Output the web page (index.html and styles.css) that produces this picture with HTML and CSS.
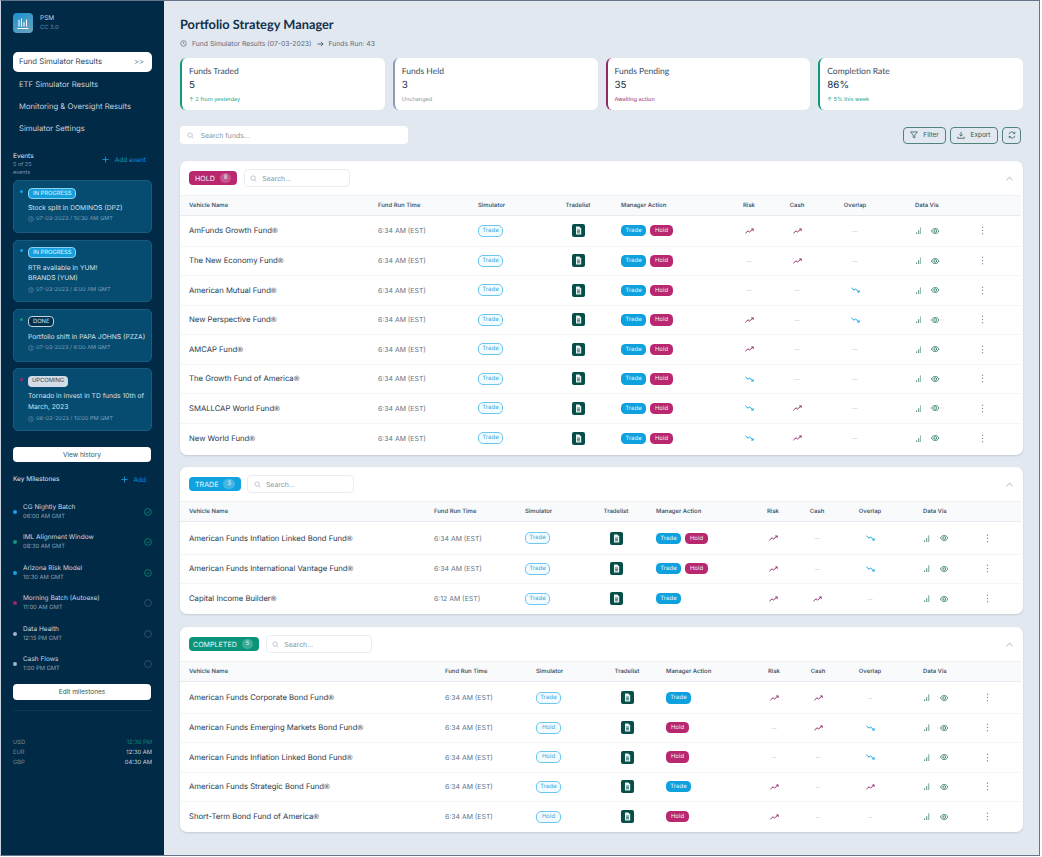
FILE: index.html
```html
<!DOCTYPE html>
<html lang="en">
<head>
<meta charset="utf-8">
<title>Portfolio Strategy Manager</title>
<link rel="stylesheet" href="styles.css">
</head>
<body>
<svg class="defs" aria-hidden="true">
  <symbol id="i-clock" viewBox="0 0 12 12"><circle cx="6" cy="6" r="4.8" fill="none" stroke="currentColor"/><path d="M6 3.2V6l2 1.2" fill="none" stroke="currentColor"/></symbol>
  <symbol id="i-search" viewBox="0 0 12 12"><circle cx="5.3" cy="5.3" r="3.8" fill="none" stroke="currentColor"/><path d="M8.2 8.2l2.6 2.6" stroke="currentColor"/></symbol>
  <symbol id="i-doc" viewBox="0 0 13 13"><rect width="13" height="13" rx="2" fill="#064e47"/><path d="M4 2.600h3.400L9.200 4.400v6H4z" fill="#e8f3f1"/><path d="M5 6h3M5 7.400h3M5 8.800h3" stroke="#064e47" stroke-width=".7"/></symbol>
  <symbol id="i-up" viewBox="0 0 9 6"><path d="M.4 5.200l2.600-2.400 1.600 1.200L8 1" fill="none" stroke="#96306f" stroke-width="1"/><path d="M5.800.6H8.600V3.200z" fill="#96306f"/></symbol>
  <symbol id="i-down" viewBox="0 0 9 6"><path d="M.4.8l2.600 2.400 1.600-1.200L8 5" fill="none" stroke="#18a4e4" stroke-width="1"/><path d="M5.800 5.400H8.600V2.800z" fill="#18a4e4"/></symbol>
  <symbol id="i-bars" viewBox="0 0 5.500 7"><path d="M.6 7V5.400M2.700 7V3.200M4.900 7V.4" stroke="#3f7f73" stroke-width=".9" fill="none"/></symbol>
  <symbol id="i-eye" viewBox="0 0 10 7"><path d="M.5 3.500C2 1.200 3.400.5 5 .5s3 .7 4.500 3c-1.500 2.300-2.900 3-4.500 3s-3-.7-4.500-3z" fill="none" stroke="#2f7a6c"/><circle cx="5" cy="3.500" r="1.600" fill="none" stroke="#2f7a6c"/></symbol>
  <symbol id="i-more" viewBox="0 0 3 9"><circle cx="1.500" cy="1.200" r=".7" fill="#7f8ea3"/><circle cx="1.500" cy="4.500" r=".7" fill="#7f8ea3"/><circle cx="1.500" cy="7.800" r=".7" fill="#7f8ea3"/></symbol>
  <symbol id="i-chev" viewBox="0 0 8 5"><path d="M.7 4.200L4 1l3.300 3.200" fill="none" stroke="#94a3b8"/></symbol>
  <symbol id="i-plus" viewBox="0 0 7 7"><path d="M3.500.5v6M.5 3.500h6" stroke="#0e8fd0" fill="none"/></symbol>
  <symbol id="i-check" viewBox="0 0 8 8"><circle cx="4" cy="4" r="3.400" fill="none" stroke="#0c8a73" stroke-width=".8"/><path d="M2.500 4l1.100 1.100 2-2.100" fill="none" stroke="#0c8a73" stroke-width=".8"/></symbol>
  <symbol id="i-ring" viewBox="0 0 8 8"><circle cx="4" cy="4" r="3.400" fill="none" stroke="#3d5a70" stroke-width=".8"/></symbol>
</svg>

<div class="frame">
  <aside class="sidebar">
    <div class="brand">
      <span class="logo"><svg viewBox="0 0 20 20" width="20" height="20"><path d="M6 13.500V7M8.500 13.500V5.500M11 13.500V9M13.500 13.500V6.500M4.500 15.500h11" stroke="#fff" stroke-width="1.100" fill="none"/></svg></span>
      <div class="brand-text"><div class="brand-name">PSM</div><div class="brand-ver">CC 3.0</div></div>
    </div>

    <nav class="nav">
      <a class="nav-item is-active"><span>Fund Simulator Results</span><span class="nav-arrows">&gt;&gt;</span></a>
      <a class="nav-item">ETF Simulator Results</a>
      <a class="nav-item">Monitoring &amp; Oversight Results</a>
      <a class="nav-item">Simulator Settings</a>
    </nav>

    <div class="events-head">
      <div class="events-title"><div class="side-h">Events</div><div class="events-count">5 of 25<br>events</div></div>
      <a class="add-link add-event"><svg class="i7"><use href="#i-plus"/></svg>Add event</a>
    </div>

    <div class="event-list">
      <div class="event ev-short">
        <span class="ev-dot dot-blue"></span>
        <div><span class="ev-tag tag-prog">IN PROGRESS</span><div class="ev-title">Stock split in DOMINOS (DPZ)</div><div class="ev-time"><svg class="i6"><use href="#i-clock"/></svg>07-03-2023 / 10:30 AM GMT</div></div>
      </div>
      <div class="event ev-tall">
        <span class="ev-dot dot-blue"></span>
        <div><span class="ev-tag tag-prog">IN PROGRESS</span><div class="ev-title">RTR available in YUM!<br>BRANDS (YUM)</div><div class="ev-time"><svg class="i6"><use href="#i-clock"/></svg>07-03-2023 / 8:00 AM GMT</div></div>
      </div>
      <div class="event ev-short">
        <span class="ev-dot dot-green"></span>
        <div><span class="ev-tag tag-done">DONE</span><div class="ev-title">Portfolio shift in PAPA JOHNS (PZZA)</div><div class="ev-time"><svg class="i6"><use href="#i-clock"/></svg>07-03-2023 / 6:00 AM GMT</div></div>
      </div>
      <div class="event ev-tall">
        <span class="ev-dot dot-pink"></span>
        <div><span class="ev-tag tag-up">UPCOMING</span><div class="ev-title">Tornado in invest in TD funds 10th of<br>March, 2023</div><div class="ev-time"><svg class="i6"><use href="#i-clock"/></svg>06-03-2023 / 10:00 PM GMT</div></div>
      </div>
    </div>

    <button class="side-btn history-btn">View history</button>

    <div class="ms-head">
      <div class="side-h">Key Milestones</div>
      <a class="add-link add-ms"><svg class="i7"><use href="#i-plus"/></svg>Add</a>
    </div>

    <ul class="ms-list">
      <li class="ms"><span class="ms-dot dot-blue"></span><div class="ms-text"><div class="ms-title">CG Nightly Batch</div><div class="ms-time">06:00 AM GMT</div></div><svg class="i8"><use href="#i-check"/></svg></li>
      <li class="ms"><span class="ms-dot dot-green"></span><div class="ms-text"><div class="ms-title">IML Alignment Window</div><div class="ms-time">08:30 AM GMT</div></div><svg class="i8"><use href="#i-check"/></svg></li>
      <li class="ms"><span class="ms-dot dot-blue"></span><div class="ms-text"><div class="ms-title">Arizona Risk Model</div><div class="ms-time">10:30 AM GMT</div></div><svg class="i8"><use href="#i-check"/></svg></li>
      <li class="ms"><span class="ms-dot dot-pink"></span><div class="ms-text"><div class="ms-title">Morning Batch (Autoexe)</div><div class="ms-time">11:00 AM GMT</div></div><svg class="i8"><use href="#i-ring"/></svg></li>
      <li class="ms"><span class="ms-dot dot-grey"></span><div class="ms-text"><div class="ms-title">Data Health</div><div class="ms-time">12:15 PM GMT</div></div><svg class="i8"><use href="#i-ring"/></svg></li>
      <li class="ms"><span class="ms-dot dot-grey"></span><div class="ms-text"><div class="ms-title">Cash Flows</div><div class="ms-time">1:00 PM GMT</div></div><svg class="i8"><use href="#i-ring"/></svg></li>
    </ul>

    <button class="side-btn edit-btn">Edit milestones</button>

    <div class="clocks">
      <div class="clock-row"><span>USD</span><span class="clock-now">12:30 PM</span></div>
      <div class="clock-row"><span>EUR</span><span class="clock-val">12:30 AM</span></div>
      <div class="clock-row"><span>GBP</span><span class="clock-val">04:30 AM</span></div>
    </div>
  </aside>

  <main class="main">
    <h1 class="title">Portfolio Strategy Manager</h1>
    <div class="crumbs">
      <svg class="i7"><use href="#i-clock"/></svg><span>Fund Simulator Results (07-03-2023)</span>
      <svg class="crumb-arrow" viewBox="0 0 8 7" width="7" height="6"><path d="M.5 3.500h6.500M4.500 1l2.500 2.500L4.500 6" fill="none" stroke="#475569"/></svg><span>Funds Run: 43</span>
    </div>

    <section class="stats">
      <div class="stat st-green"><div class="stat-label">Funds Traded</div><div class="stat-val">5</div><div class="stat-note note-green">↑ 2 from yesterday</div></div>
      <div class="stat st-grey"><div class="stat-label">Funds Held</div><div class="stat-val">3</div><div class="stat-note note-grey">Unchanged</div></div>
      <div class="stat st-pink"><div class="stat-label">Funds Pending</div><div class="stat-val">35</div><div class="stat-note note-pink">Awaiting action</div></div>
      <div class="stat st-green"><div class="stat-label">Completion Rate</div><div class="stat-val">86%</div><div class="stat-note note-green">↑ 5% this week</div></div>
    </section>

    <div class="toolbar">
      <label class="search-main"><svg class="i7 ic-search"><use href="#i-search"/></svg><span>Search funds...</span></label>
      <div class="tools">
        <button class="tool tool-filter"><svg viewBox="0 0 9 9" width="8" height="8"><path d="M.7 1h7.600L5.400 4.600v3.200L3.600 7V4.600z" fill="none" stroke="#20564f" stroke-width=".8"/></svg>Filter</button>
        <button class="tool tool-export"><svg viewBox="0 0 9 9" width="8" height="8"><path d="M4.500.8v5M2.500 3.800l2 2 2-2M.8 6.500v1.700h7.400V6.500" fill="none" stroke="#20564f" stroke-width=".8"/></svg>Export</button>
        <button class="tool tool-refresh"><svg viewBox="0 0 9 9" width="8" height="8"><path d="M1.200 3.600A3.400 3.400 0 0 1 7.500 2.800M7.800 5.400A3.400 3.400 0 0 1 1.500 6.200M7.600 1v1.900H5.800M1.400 8V6.100h1.800" fill="none" stroke="#20564f" stroke-width=".8"/></svg></button>
      </div>
    </div>

    <section class="panel cols-hold">
      <header class="panel-head">
        <span class="badge b-hold">HOLD<span class="badge-n">8</span></span>
        <label class="search-sm"><svg class="i7 ic-search"><use href="#i-search"/></svg><span>Search...</span></label>
        <svg class="chev"><use href="#i-chev"/></svg>
      </header>
      <div class="row th"><div>Vehicle Name</div><div>Fund Run Time</div><div>Simulator</div><div class="ctr">Tradelist</div><div>Manager Action</div><div class="ctr">Risk</div><div class="ctr">Cash</div><div class="ctr">Overlap</div><div class="vis">Data Vis</div><div></div></div>

      <div class="row tr"><div class="name">AmFunds Growth Fund<span class="reg">®</span></div><div class="time">6:34 AM (EST)</div><div><span class="pill-o">Trade</span></div><div class="ctr"><svg class="doc"><use href="#i-doc"/></svg></div><div class="acts"><span class="pill p-trade">Trade</span><span class="pill p-hold">Hold</span></div><div class="ctr"><svg class="tr-i"><use href="#i-up"/></svg></div><div class="ctr"><svg class="tr-i"><use href="#i-up"/></svg></div><div class="ctr dash">—</div><div class="vis"><svg class="v-b"><use href="#i-bars"/></svg><svg class="v-e"><use href="#i-eye"/></svg></div><div class="ctr"><svg class="more"><use href="#i-more"/></svg></div></div>
      <div class="row tr"><div class="name">The New Economy Fund<span class="reg">®</span></div><div class="time">6:34 AM (EST)</div><div><span class="pill-o">Trade</span></div><div class="ctr"><svg class="doc"><use href="#i-doc"/></svg></div><div class="acts"><span class="pill p-trade">Trade</span><span class="pill p-hold">Hold</span></div><div class="ctr dash">—</div><div class="ctr"><svg class="tr-i"><use href="#i-up"/></svg></div><div class="ctr dash">—</div><div class="vis"><svg class="v-b"><use href="#i-bars"/></svg><svg class="v-e"><use href="#i-eye"/></svg></div><div class="ctr"><svg class="more"><use href="#i-more"/></svg></div></div>
      <div class="row tr"><div class="name">American Mutual Fund<span class="reg">®</span></div><div class="time">6:34 AM (EST)</div><div><span class="pill-o">Trade</span></div><div class="ctr"><svg class="doc"><use href="#i-doc"/></svg></div><div class="acts"><span class="pill p-trade">Trade</span><span class="pill p-hold">Hold</span></div><div class="ctr dash">—</div><div class="ctr dash">—</div><div class="ctr"><svg class="tr-i"><use href="#i-down"/></svg></div><div class="vis"><svg class="v-b"><use href="#i-bars"/></svg><svg class="v-e"><use href="#i-eye"/></svg></div><div class="ctr"><svg class="more"><use href="#i-more"/></svg></div></div>
      <div class="row tr"><div class="name">New Perspective Fund<span class="reg">®</span></div><div class="time">6:34 AM (EST)</div><div><span class="pill-o">Trade</span></div><div class="ctr"><svg class="doc"><use href="#i-doc"/></svg></div><div class="acts"><span class="pill p-trade">Trade</span><span class="pill p-hold">Hold</span></div><div class="ctr"><svg class="tr-i"><use href="#i-up"/></svg></div><div class="ctr dash">—</div><div class="ctr"><svg class="tr-i"><use href="#i-down"/></svg></div><div class="vis"><svg class="v-b"><use href="#i-bars"/></svg><svg class="v-e"><use href="#i-eye"/></svg></div><div class="ctr"><svg class="more"><use href="#i-more"/></svg></div></div>
      <div class="row tr"><div class="name">AMCAP Fund<span class="reg">®</span></div><div class="time">6:34 AM (EST)</div><div><span class="pill-o">Trade</span></div><div class="ctr"><svg class="doc"><use href="#i-doc"/></svg></div><div class="acts"><span class="pill p-trade">Trade</span><span class="pill p-hold">Hold</span></div><div class="ctr"><svg class="tr-i"><use href="#i-up"/></svg></div><div class="ctr dash">—</div><div class="ctr dash">—</div><div class="vis"><svg class="v-b"><use href="#i-bars"/></svg><svg class="v-e"><use href="#i-eye"/></svg></div><div class="ctr"><svg class="more"><use href="#i-more"/></svg></div></div>
      <div class="row tr"><div class="name">The Growth Fund of America<span class="reg">®</span></div><div class="time">6:34 AM (EST)</div><div><span class="pill-o">Trade</span></div><div class="ctr"><svg class="doc"><use href="#i-doc"/></svg></div><div class="acts"><span class="pill p-trade">Trade</span><span class="pill p-hold">Hold</span></div><div class="ctr"><svg class="tr-i"><use href="#i-down"/></svg></div><div class="ctr dash">—</div><div class="ctr dash">—</div><div class="vis"><svg class="v-b"><use href="#i-bars"/></svg><svg class="v-e"><use href="#i-eye"/></svg></div><div class="ctr"><svg class="more"><use href="#i-more"/></svg></div></div>
      <div class="row tr"><div class="name">SMALLCAP World Fund<span class="reg">®</span></div><div class="time">6:34 AM (EST)</div><div><span class="pill-o">Trade</span></div><div class="ctr"><svg class="doc"><use href="#i-doc"/></svg></div><div class="acts"><span class="pill p-trade">Trade</span><span class="pill p-hold">Hold</span></div><div class="ctr"><svg class="tr-i"><use href="#i-down"/></svg></div><div class="ctr"><svg class="tr-i"><use href="#i-up"/></svg></div><div class="ctr dash">—</div><div class="vis"><svg class="v-b"><use href="#i-bars"/></svg><svg class="v-e"><use href="#i-eye"/></svg></div><div class="ctr"><svg class="more"><use href="#i-more"/></svg></div></div>
      <div class="row tr"><div class="name">New World Fund<span class="reg">®</span></div><div class="time">6:34 AM (EST)</div><div><span class="pill-o">Trade</span></div><div class="ctr"><svg class="doc"><use href="#i-doc"/></svg></div><div class="acts"><span class="pill p-trade">Trade</span><span class="pill p-hold">Hold</span></div><div class="ctr"><svg class="tr-i"><use href="#i-down"/></svg></div><div class="ctr"><svg class="tr-i"><use href="#i-up"/></svg></div><div class="ctr dash">—</div><div class="vis"><svg class="v-b"><use href="#i-bars"/></svg><svg class="v-e"><use href="#i-eye"/></svg></div><div class="ctr"><svg class="more"><use href="#i-more"/></svg></div></div>
    </section>

    <section class="panel cols-trade">
      <header class="panel-head">
        <span class="badge b-trade">TRADE<span class="badge-n">3</span></span>
        <label class="search-sm"><svg class="i7 ic-search"><use href="#i-search"/></svg><span>Search...</span></label>
        <svg class="chev"><use href="#i-chev"/></svg>
      </header>
      <div class="row th"><div>Vehicle Name</div><div>Fund Run Time</div><div>Simulator</div><div class="ctr">Tradelist</div><div>Manager Action</div><div class="ctr">Risk</div><div class="ctr">Cash</div><div class="ctr">Overlap</div><div class="vis">Data Vis</div><div></div></div>

      <div class="row tr"><div class="name">American Funds Inflation Linked Bond Fund<span class="reg">®</span></div><div class="time">6:34 AM (EST)</div><div><span class="pill-o">Trade</span></div><div class="ctr"><svg class="doc"><use href="#i-doc"/></svg></div><div class="acts"><span class="pill p-trade">Trade</span><span class="pill p-hold">Hold</span></div><div class="ctr"><svg class="tr-i"><use href="#i-up"/></svg></div><div class="ctr dash">—</div><div class="ctr"><svg class="tr-i"><use href="#i-down"/></svg></div><div class="vis"><svg class="v-b"><use href="#i-bars"/></svg><svg class="v-e"><use href="#i-eye"/></svg></div><div class="ctr"><svg class="more"><use href="#i-more"/></svg></div></div>
      <div class="row tr"><div class="name">American Funds International Vantage Fund<span class="reg">®</span></div><div class="time">6:34 AM (EST)</div><div><span class="pill-o">Trade</span></div><div class="ctr"><svg class="doc"><use href="#i-doc"/></svg></div><div class="acts"><span class="pill p-trade">Trade</span><span class="pill p-hold">Hold</span></div><div class="ctr"><svg class="tr-i"><use href="#i-up"/></svg></div><div class="ctr dash">—</div><div class="ctr"><svg class="tr-i"><use href="#i-down"/></svg></div><div class="vis"><svg class="v-b"><use href="#i-bars"/></svg><svg class="v-e"><use href="#i-eye"/></svg></div><div class="ctr"><svg class="more"><use href="#i-more"/></svg></div></div>
      <div class="row tr"><div class="name">Capital Income Builder<span class="reg">®</span></div><div class="time">6:12 AM (EST)</div><div><span class="pill-o">Trade</span></div><div class="ctr"><svg class="doc"><use href="#i-doc"/></svg></div><div class="acts"><span class="pill p-trade">Trade</span></div><div class="ctr"><svg class="tr-i"><use href="#i-up"/></svg></div><div class="ctr"><svg class="tr-i"><use href="#i-up"/></svg></div><div class="ctr dash">—</div><div class="vis"><svg class="v-b"><use href="#i-bars"/></svg><svg class="v-e"><use href="#i-eye"/></svg></div><div class="ctr"><svg class="more"><use href="#i-more"/></svg></div></div>
    </section>

    <section class="panel cols-done">
      <header class="panel-head">
        <span class="badge b-done">COMPLETED<span class="badge-n">5</span></span>
        <label class="search-sm"><svg class="i7 ic-search"><use href="#i-search"/></svg><span>Search...</span></label>
        <svg class="chev"><use href="#i-chev"/></svg>
      </header>
      <div class="row th"><div>Vehicle Name</div><div>Fund Run Time</div><div>Simulator</div><div class="ctr">Tradelist</div><div>Manager Action</div><div class="ctr">Risk</div><div class="ctr">Cash</div><div class="ctr">Overlap</div><div class="vis">Data Vis</div><div></div></div>

      <div class="row tr"><div class="name">American Funds Corporate Bond Fund<span class="reg">®</span></div><div class="time">6:34 AM (EST)</div><div><span class="pill-o">Trade</span></div><div class="ctr"><svg class="doc"><use href="#i-doc"/></svg></div><div class="acts"><span class="pill p-trade">Trade</span></div><div class="ctr"><svg class="tr-i"><use href="#i-up"/></svg></div><div class="ctr"><svg class="tr-i"><use href="#i-up"/></svg></div><div class="ctr dash">—</div><div class="vis"><svg class="v-b"><use href="#i-bars"/></svg><svg class="v-e"><use href="#i-eye"/></svg></div><div class="ctr"><svg class="more"><use href="#i-more"/></svg></div></div>
      <div class="row tr"><div class="name">American Funds Emerging Markets Bond Fund<span class="reg">®</span></div><div class="time">6:34 AM (EST)</div><div><span class="pill-o">Hold</span></div><div class="ctr"><svg class="doc"><use href="#i-doc"/></svg></div><div class="acts"><span class="pill p-hold">Hold</span></div><div class="ctr dash">—</div><div class="ctr"><svg class="tr-i"><use href="#i-up"/></svg></div><div class="ctr"><svg class="tr-i"><use href="#i-down"/></svg></div><div class="vis"><svg class="v-b"><use href="#i-bars"/></svg><svg class="v-e"><use href="#i-eye"/></svg></div><div class="ctr"><svg class="more"><use href="#i-more"/></svg></div></div>
      <div class="row tr"><div class="name">American Funds Inflation Linked Bond Fund<span class="reg">®</span></div><div class="time">6:34 AM (EST)</div><div><span class="pill-o">Hold</span></div><div class="ctr"><svg class="doc"><use href="#i-doc"/></svg></div><div class="acts"><span class="pill p-hold">Hold</span></div><div class="ctr dash">—</div><div class="ctr dash">—</div><div class="ctr"><svg class="tr-i"><use href="#i-down"/></svg></div><div class="vis"><svg class="v-b"><use href="#i-bars"/></svg><svg class="v-e"><use href="#i-eye"/></svg></div><div class="ctr"><svg class="more"><use href="#i-more"/></svg></div></div>
      <div class="row tr"><div class="name">American Funds Strategic Bond Fund<span class="reg">®</span></div><div class="time">6:34 AM (EST)</div><div><span class="pill-o">Trade</span></div><div class="ctr"><svg class="doc"><use href="#i-doc"/></svg></div><div class="acts"><span class="pill p-trade">Trade</span></div><div class="ctr"><svg class="tr-i"><use href="#i-up"/></svg></div><div class="ctr dash">—</div><div class="ctr"><svg class="tr-i"><use href="#i-up"/></svg></div><div class="vis"><svg class="v-b"><use href="#i-bars"/></svg><svg class="v-e"><use href="#i-eye"/></svg></div><div class="ctr"><svg class="more"><use href="#i-more"/></svg></div></div>
      <div class="row tr"><div class="name">Short-Term Bond Fund of America<span class="reg">®</span></div><div class="time">6:34 AM (EST)</div><div><span class="pill-o">Hold</span></div><div class="ctr"><svg class="doc"><use href="#i-doc"/></svg></div><div class="acts"><span class="pill p-hold">Hold</span></div><div class="ctr"><svg class="tr-i"><use href="#i-up"/></svg></div><div class="ctr dash">—</div><div class="ctr dash">—</div><div class="vis"><svg class="v-b"><use href="#i-bars"/></svg><svg class="v-e"><use href="#i-eye"/></svg></div><div class="ctr"><svg class="more"><use href="#i-more"/></svg></div></div>
    </section>
  </main>
</div>
</body>
</html>
```

FILE: styles.css
```css
* { box-sizing: border-box; }
html, body { margin: 0; background: #fff; }
body { font-family: Inter, "Liberation Sans", sans-serif; color: #1e293b; text-rendering: geometricPrecision; }
.defs { display: none; }
svg { display: block; flex: none; }
.i6 { width: 6px; height: 6px; }
.i7 { width: 7px; height: 7px; }
.i8 { width: 8px; height: 8px; }

.frame { display: flex; width: 1040px; height: 856px; border: 1px solid #64748b; border-left-color: #c9d3df; overflow: hidden; background: #e2e8f0; }

/* sidebar */
.sidebar { width: 163px; flex: none; background: #012a47; color: #e2e8f0; padding: 12px 12px 0; display: flex; flex-direction: column; }
.brand { display: flex; align-items: center; gap: 7px; height: 20px; }
.logo { width: 20px; height: 20px; border-radius: 4px; background: linear-gradient(150deg, #1a8fd0, #6da4bd); display: block; }
.brand-name { font-size: 6.5px; line-height: 9.5px; color: #c6d2dd; }
.brand-ver { font-size: 5.8px; line-height: 9.5px; color: #6f8aa0; }
.nav { margin-top: 18.7px; display: flex; flex-direction: column; gap: 2px; }
.nav-item { height: 20.3px; border-radius: 5px; display: flex; align-items: center; justify-content: space-between; padding: 0 8px 0 6px; font-size: 7.7px; color: #c5d1dc; }
.is-active { background: #fff; color: #24475f; }
.nav-arrows { font-size: 7.5px; }
.events-head { margin-top: 13.3px; display: flex; justify-content: space-between; }
.side-h { font-size: 6.5px; line-height: 9px; color: #dbe4ec; }
.events-count { font-size: 5.5px; line-height: 8px; color: #7f97aa; }
.add-link { display: flex; align-items: center; gap: 6px; font-size: 6.5px; color: #0e8fd0; }
.add-event { margin: 0 6px 10px 0; }
.event-list { margin-top: 3px; display: flex; flex-direction: column; gap: 6.6px; }
.event { display: flex; gap: 5.5px; background: #064b70; border: 1px solid #1a5c80; border-radius: 5px; padding: 6.5px 4px 0 5.5px; width: 138.5px; }
.ev-short { height: 53px; }
.ev-tall { height: 62.5px; }
.ev-dot { width: 3px; height: 3px; border-radius: 50%; margin-top: 2px; flex: none; }
.dot-blue { background: #0ea5e9; }
.dot-green { background: #0e9a7c; }
.dot-pink { background: #a5246d; }
.dot-grey { background: #a6b4c4; }
.ev-tag { display: block; width: fit-content; font-size: 5.8px; line-height: 10px; height: 11px; padding: 0 4px; border-radius: 4px; }
.tag-prog { background: #129fdc; color: #e6f5fc; border: .5px solid #8bd1f0; }
.tag-done { background: #02304f; color: #dce6ee; border: .5px solid #c6d4df; }
.tag-up { background: #d3dde8; color: #2f4a5f; }
.ev-title { font-size: 6.7px; line-height: 10.3px; color: #d8e2ea; margin-top: 4.5px; white-space: nowrap; }
.ev-time { display: flex; align-items: center; gap: 2px; font-size: 5.6px; line-height: 8px; color: #7f9fb6; margin-top: 1.5px; }
.ev-tall .ev-time { margin-top: 2.5px; }
.side-btn { display: block; width: 138px; height: 15.5px; border: 0; padding: 0; border-radius: 4px; background: #fff; color: #2a5a5b; font-family: inherit; font-size: 6.5px; flex: none; }
.history-btn { margin-top: 16px; }
.ms-head { display: flex; justify-content: space-between; align-items: center; margin-top: 12.5px; height: 10px; flex: none; }
.add-ms { margin-right: 6px; }
.ms-list { list-style: none; margin: 18px 0 0; padding: 0; display: flex; flex-direction: column; gap: 12.5px; }
.ms { display: flex; align-items: center; height: 18px; }
.ms-dot { width: 4px; height: 4px; border-radius: 50%; flex: none; }
.ms-text { flex: 1; margin-left: 6px; }
.ms-title { font-size: 6.5px; line-height: 9px; color: #ccd8e2; }
.ms-time { font-size: 5.8px; line-height: 9px; color: #8ea4b6; }
.edit-btn { margin-top: 10.7px; }
.clocks { margin-top: 10px; border-top: 1px solid #0a3a4c; padding-top: 28px; display: flex; flex-direction: column; gap: 2.9px; }
.clock-row { display: flex; justify-content: space-between; font-size: 5.8px; line-height: 7.4px; color: #6f8aa0; }
.clock-now { color: #0e8a73; }
.clock-val { color: #c9d5df; }

/* main */
.main { flex: 1; min-width: 0; padding: 14.5px 16px 0 16px; }
.title { margin: 0; font-family: Lato, sans-serif; font-size: 12.8px; line-height: 16px; font-weight: 700; color: #12304a; }
.crumbs { display: flex; align-items: center; gap: 5px; margin-top: 7.5px; height: 9px; font-size: 6.8px; color: #5b6b7f; }
.crumbs svg { color: #475569; }
.stats { display: grid; grid-template-columns: repeat(4, 1fr); gap: 8px; margin-top: 9.5px; }
.stat { height: 52px; background: #fff; border-radius: 6px; border-left: 2px solid; padding: 8px 7px; }
.st-green { border-left-color: #0e9a7c; }
.st-grey { border-left-color: #8a9bb5; }
.st-pink { border-left-color: #8f2a68; }
.stat-label { font-family: Lato, sans-serif; font-size: 8.5px; line-height: 10px; color: #3c4c60; }
.stat-val { font-size: 9.8px; line-height: 13px; color: #17324c; margin-top: 3px; }
.stat-note { font-size: 5.6px; line-height: 8px; margin-top: 4px; }
.note-green { color: #1aa58a; }
.note-grey { color: #8493a5; }
.note-pink { color: #96306f; }

.toolbar { display: flex; justify-content: space-between; align-items: center; margin-top: 16px; height: 19px; }
.search-main { width: 228px; height: 18.5px; background: #fff; border-radius: 4px; display: flex; align-items: center; padding-left: 7px; gap: 6.5px; font-size: 6.9px; color: #8793a3; }
.ic-search { color: #94a3b8; }
.tools { display: flex; gap: 4px; margin-right: 2px; }
.tool { height: 17px; display: flex; align-items: center; justify-content: center; gap: 5px; background: transparent; border: 1px solid #52837b; border-radius: 4px; color: #2a5a5b; font-family: inherit; font-size: 6.5px; padding: 0; }
.tool-filter { width: 43px; }
.tool-export { width: 48px; }
.tool-refresh { width: 19px; }

.panel { background: #fff; border-radius: 7px; box-shadow: 0 1px 2px rgba(71, 85, 105, .2); overflow: hidden; margin-top: 12.7px; }
.toolbar + .panel { margin-top: 16.5px; padding-bottom: 1.5px; }
.cols-done { margin-top: 13.5px; }
.panel-head { height: 34px; display: flex; align-items: center; padding: 0 9px; gap: 6.5px; }
.badge { height: 14.5px; display: flex; align-items: center; gap: 5px; padding: 0 6px; border-radius: 4px; color: #e9f4f8; font-size: 7.1px; }
.badge-n { background: rgba(255, 255, 255, .22); border-radius: 5px; height: 9.5px; min-width: 11.5px; text-align: center; font-size: 6px; line-height: 9.5px; }
.b-hold { background: #b9276f; }
.b-trade { background: #10a3e0; }
.b-done { background: #0a957a; padding-left: 4px; }
.search-sm { width: 106.5px; height: 17.5px; border: 1px solid #e9edf3; border-radius: 4px; display: flex; align-items: center; gap: 5px; padding-left: 5.5px; font-size: 6.9px; color: #8793a3; }
.chev { width: 7px; height: 5px; margin-left: auto; margin-right: 1px; }

.row { display: grid; width: 841px; align-items: center; padding-left: 9px; }
.cols-hold .row { grid-template-columns: 189px 100px 57px 86px 104px 48px 48px 68px 71px 44px; }
.cols-trade .row { grid-template-columns: 245px 91px 51px 80px 93px 48px 40px 66px 61px 46px; }
.cols-done .row { grid-template-columns: 256px 91px 52px 78px 84px 48px 40px 64px 62px 46px; }
.th { height: 20.5px; background: #f8fafc; border-top: 1px solid #eef1f5; border-bottom: 1px solid #e7ebf1; font-size: 5.9px; font-weight: 600; color: #4b5a6e; }
.tr { height: 29.5px; border-bottom: 1px solid #f3f5f8; }
.cols-trade .tr, .cols-done .tr { padding-bottom: .5px; }
.tr > div { display: flex; align-items: center; }
.tr:last-child { border-bottom: 0; }
.th + .tr { height: 31px; }
.cols-trade .th + .tr { height: 33px; padding: 1.5px 0 0 9px; }
.cols-done .th + .tr { height: 32px; padding: 1.5px 0 0 9px; }
.name { font-size: 7.7px; color: #2b3a4d; white-space: nowrap; }
.reg { font-family: "Liberation Sans", sans-serif; }
.time { font-size: 6.9px; color: #64748b; white-space: nowrap; }
.ctr { display: flex; justify-content: center; align-items: center; }
.dash { color: #b4bfcc; font-size: 5px; padding-top: 2px; }
.pill-o { display: block; height: 12px; width: 25px; text-align: center; border: 1px solid #6cc6ee; border-radius: 5px; background: #f2fbff; color: #38aee2; font-size: 6px; line-height: 10px; }
.acts { gap: 4px; }
.pill { display: block; height: 11.5px; border-radius: 4.5px; color: #e6f3fa; font-size: 6px; line-height: 11.5px; text-align: center; }
.p-trade { background: #0ea1de; width: 25px; }
.p-hold { background: #b9276f; width: 23px; }
.doc { width: 13px; height: 13px; }
.tr-i { width: 9px; height: 6px; }
.vis { display: flex; align-items: center; gap: 10px; }
.cols-hold .vis { padding-left: 26px; }
.cols-trade .vis { padding-left: 20px; }
.cols-done .vis { padding-left: 21px; }
.th .vis { display: block; }
.v-b { width: 5.5px; height: 7px; margin-left: .5px; }
.v-e { width: 8.5px; height: 6px; }
.cols-trade .v-b, .cols-done .v-b { margin-left: 1px; }
.more { width: 3px; height: 9px; }
```
